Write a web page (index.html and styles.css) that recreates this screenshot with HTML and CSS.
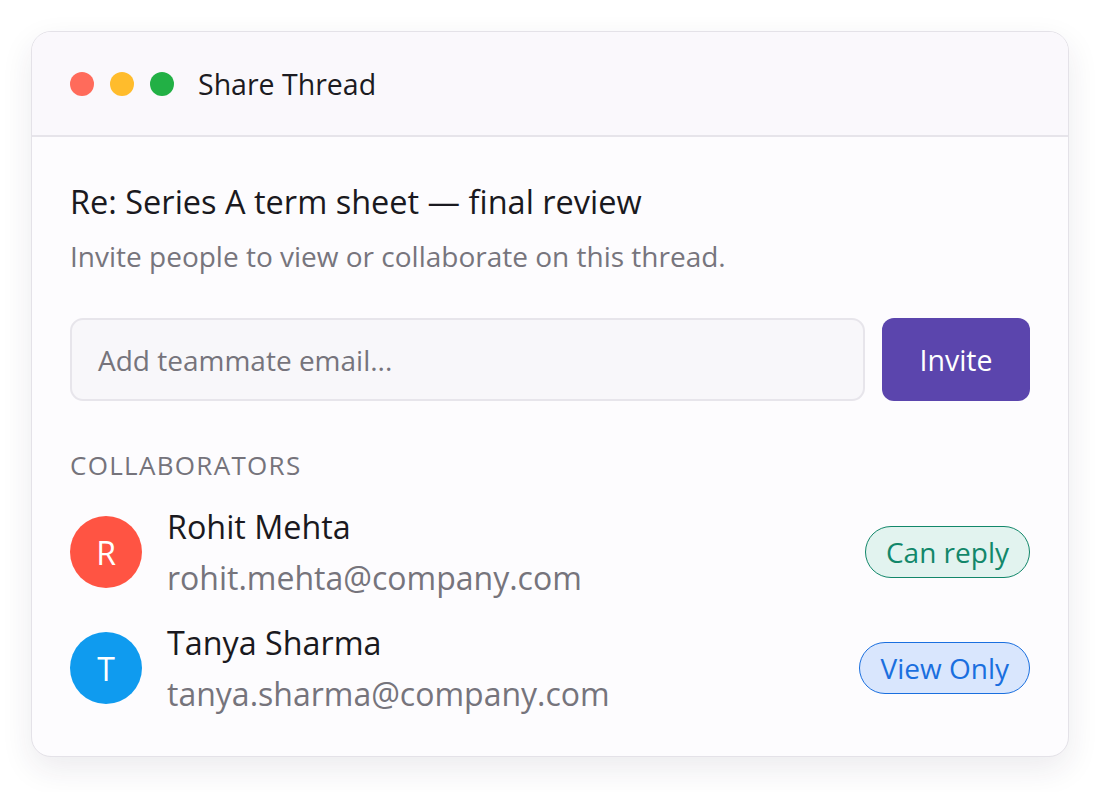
FILE: index.html
```html
<!DOCTYPE html>
<html>
<head>
<meta charset="utf-8">
<link rel="stylesheet" href="styles.css">
</head>
<body>
<div class="window">
  <div class="titlebar">
    <span class="dot dot-red"></span>
    <span class="dot dot-yellow"></span>
    <span class="dot dot-green"></span>
    <span class="window-title">Share Thread</span>
  </div>
  <div class="content">
    <h1 class="subject">Re: Series A term sheet — final review</h1>
    <p class="hint">Invite people to view or collaborate on this thread.</p>
    <div class="invite-row">
      <div class="email-input">Add teammate email...</div>
      <button class="invite-btn">Invite</button>
    </div>
    <div class="section-label">COLLABORATORS</div>
    <div class="people">
      <div class="person">
        <div class="avatar avatar-red">R</div>
        <div class="person-info">
          <div class="person-name">Rohit Mehta</div>
          <div class="person-email">rohit.mehta@company.com</div>
        </div>
        <span class="badge badge-green">Can reply</span>
      </div>
      <div class="person">
        <div class="avatar avatar-blue">T</div>
        <div class="person-info">
          <div class="person-name">Tanya Sharma</div>
          <div class="person-email">tanya.sharma@company.com</div>
        </div>
        <span class="badge badge-blue">View Only</span>
      </div>
    </div>
  </div>
</div>
</body>
</html>
```

FILE: styles.css
```css
* { box-sizing: border-box; }
html, body { margin: 0; padding: 0; background: #ffffff; }
body {
  font-family: "Open Sans", "Noto Sans", sans-serif;
  padding: 31px 35px 35px 31px;
  min-height: 792px;
}
.window {
  width: 1038px;
  height: 726px;
  border: 1px solid #e4e2e8;
  border-radius: 20px;
  background: #fdfcfe;
  box-shadow: 0 12px 32px rgba(40, 30, 70, 0.09);
  overflow: hidden;
}
.titlebar {
  height: 105px;
  background: #faf8fc;
  border-bottom: 2px solid #e6e4ea;
  display: flex;
  align-items: center;
  padding-left: 38px;
  gap: 16px;
}
.dot {
  width: 24px;
  height: 24px;
  border-radius: 50%;
  display: inline-block;
}
.dot-red { background: #ff6b5b; }
.dot-yellow { background: #ffbc2c; }
.dot-green { background: #22b045; }
.window-title {
  margin-left: 8px;
  font-size: 28.5px;
  color: #1c1b22;
}
.content {
  padding: 45px 38px 0 38px;
}
.subject {
  margin: 0;
  font-size: 32.5px;
  line-height: 40px;
  font-weight: 400;
  color: #1a1920;
}
.hint {
  margin: 17px 0 0 0;
  font-size: 28px;
  line-height: 34px;
  color: #77757d;
}
.invite-row {
  display: flex;
  gap: 17px;
  margin-top: 45px;
  height: 83px;
}
.email-input {
  flex: 1;
  background: #f8f7fa;
  border: 2px solid #e7e5eb;
  border-radius: 13px;
  display: flex;
  align-items: center;
  padding-left: 26px;
  font-size: 28px;
  color: #76747c;
}
.invite-btn {
  width: 148px;
  border: none;
  border-radius: 12px;
  background: #5b45ad;
  color: #ffffff;
  font-family: inherit;
  font-size: 28.5px;
}
.section-label {
  margin-top: 48px;
  font-size: 26px;
  line-height: 32px;
  letter-spacing: 1.3px;
  color: #75737b;
}
.people {
  margin-top: 26px;
  display: flex;
  flex-direction: column;
  gap: 26px;
}
.person {
  display: flex;
  align-items: center;
  height: 90px;
}
.avatar {
  width: 72px;
  height: 72px;
  border-radius: 50%;
  color: #ffffff;
  font-size: 32px;
  display: flex;
  align-items: center;
  justify-content: center;
  flex-shrink: 0;
}
.avatar-red { background: #ff5443; }
.avatar-blue { background: #0f9bef; }
.person-info {
  flex: 1;
  margin-left: 25px;
  display: flex;
  flex-direction: column;
  gap: 14px;
}
.person-name {
  font-size: 32.3px;
  line-height: 38px;
  color: #1a1920;
}
.person-email {
  font-size: 32px;
  line-height: 38px;
  color: #76747c;
}
.badge {
  height: 52px;
  border-radius: 26px;
  padding: 0 20px;
  font-size: 28px;
  display: flex;
  align-items: center;
  border: 1.5px solid;
}
.badge-green {
  background: #e2f3ef;
  border-color: #12876a;
  color: #12876a;
}
.badge-blue {
  background: #d9e6fd;
  border-color: #1a6fdf;
  color: #1a6fdf;
}
```
